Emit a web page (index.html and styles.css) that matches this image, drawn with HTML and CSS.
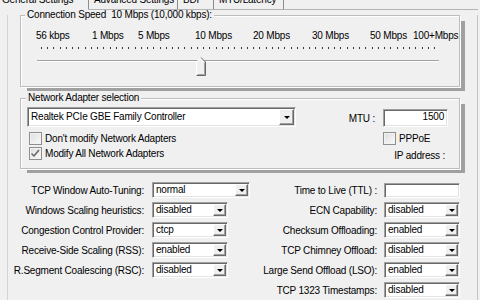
FILE: index.html
```html
<!DOCTYPE html>
<html lang="en">
<head>
    <meta charset="UTF-8">
    <title>TCP Optimizer</title>
    <link rel="stylesheet" href="styles.css">
</head>
<body>
    <div class="tabs">
        <div class="tab active">General Settings</div>
        <div class="tab tab-adv">Advanced Settings</div>
        <div class="tab tab-bdp">BDP</div>
        <div class="tab tab-mtu">MTU/Latency</div>
        <div class="tab-fill"></div>
    </div>

    <div class="page">
        <div class="group speed">
            <div class="group-title">Connection Speed&nbsp; 10 Mbps (10,000 kbps):</div>
            <div class="scale">
                <span>56 kbps</span>
                <span>1 Mbps</span>
                <span>5 Mbps</span>
                <span>10 Mbps</span>
                <span>20 Mbps</span>
                <span>30 Mbps</span>
                <span>50 Mbps</span>
                <span>100+Mbps</span>
            </div>
            <div class="slider">
                <div class="ticks"></div>
                <div class="track"></div>
                <svg class="thumb" width="10" height="19" viewBox="0 0 10 19">
                    <polygon points="0.5,5 5,0.5 9.5,5 9.5,18.5 0.5,18.5" fill="#f0f0f0"/>
                    <polyline points="0.5,18 0.5,5 5,0.5" fill="none" stroke="#fff"/>
                    <polyline points="5,0.5 9.5,5 9.5,18.5 0.5,18.5" fill="none" stroke="#696969"/>
                    <polyline points="8.5,5.5 8.5,17.5 1.5,17.5" fill="none" stroke="#a0a0a0"/>
                </svg>
            </div>
        </div>

        <div class="group adapter">
            <div class="group-title">Network Adapter selection</div>
            <div class="adapter-body">
                <div class="adapter-left">
                    <div class="combo adapter-combo">
                        <span class="value">Realtek PCIe GBE Family Controller</span>
                        <span class="arrow"><i></i></span>
                    </div>
                    <div class="check first"><span class="box"></span>Don't modify Network Adapters</div>
                    <div class="check">
                        <span class="box">
                            <svg width="11" height="11" viewBox="0 0 11 11"><polyline points="1.5,5.5 4,8 9,2" fill="none" stroke="#606060" stroke-width="1.4"/></svg>
                        </span>Modify All Network Adapters
                    </div>
                </div>
                <div class="adapter-right">
                    <span class="mtu-label">MTU :</span>
                    <div class="field mtu">1500</div>
                    <div class="check pppoe"><span class="box"></span>PPPoE</div>
                    <span class="ip">IP address :</span>
                </div>
            </div>
        </div>

        <div class="settings">
            <span class="label">TCP Window Auto-Tuning:</span>
            <div class="combo wide"><span class="value">normal</span><span class="arrow"><i></i></span></div>
            <span class="label">Time to Live (TTL) :</span>
            <div class="field right"></div>

            <span class="label">Windows Scaling heuristics:</span>
            <div class="combo"><span class="value">disabled</span><span class="arrow"><i></i></span></div>
            <span class="label">ECN Capability:</span>
            <div class="combo right"><span class="value">disabled</span><span class="arrow"><i></i></span></div>

            <span class="label">Congestion Control Provider:</span>
            <div class="combo"><span class="value">ctcp</span><span class="arrow"><i></i></span></div>
            <span class="label">Checksum Offloading:</span>
            <div class="combo right"><span class="value">enabled</span><span class="arrow"><i></i></span></div>

            <span class="label">Receive-Side Scaling (RSS):</span>
            <div class="combo"><span class="value">enabled</span><span class="arrow"><i></i></span></div>
            <span class="label">TCP Chimney Offload:</span>
            <div class="combo right"><span class="value">disabled</span><span class="arrow"><i></i></span></div>

            <span class="label">R.Segment Coalescing (RSC):</span>
            <div class="combo"><span class="value">disabled</span><span class="arrow"><i></i></span></div>
            <span class="label">Large Send Offload (LSO):</span>
            <div class="combo right"><span class="value">enabled</span><span class="arrow"><i></i></span></div>

            <span class="label last">TCP 1323 Timestamps:</span>
            <div class="combo right"><span class="value">disabled</span><span class="arrow"><i></i></span></div>
        </div>
    </div>
</body>
</html>
```

FILE: styles.css
```css
body {
    margin: 0;
    width: 480px;
    height: 300px;
    overflow: hidden;
    background-color: #f0f0f0;
    color: #000;
    font-family: "Liberation Sans", Arial, sans-serif;
    font-size: 10px;
    letter-spacing: -0.2px;
}

/* tab strip, cut off at the top */
.tabs {
    display: flex;
    width: 478px;
    height: 19px;
    margin-top: -9px;
    line-height: 18px;
}
.tab {
    box-sizing: border-box;
    flex: none;
    padding-left: 5px;
    border-right: 1px solid #8c8c8c;
    border-bottom: 1px solid #b4b4b4;
    white-space: nowrap;
    overflow: hidden;
}
.tab.active {
    width: 89px;
    padding-left: 2px;
    border-bottom-color: transparent;
}
.tab-adv { width: 89px; }
.tab-bdp { width: 36px; }
.tab-mtu { width: 70px; }
.tab-fill {
    flex: 1;
    border-bottom: 1px solid #b4b4b4;
}

.page {
    box-sizing: border-box;
    width: 471px;
    height: 300px;
    margin-left: 7px;
    border-left: 1px solid #d4d4d4;
    border-right: 1px solid #c4c4c4;
}

/* group boxes */
.group {
    box-sizing: border-box;
    width: 440px;
    margin-left: 12px;
    border: 1px solid #bdbdbd;
    box-shadow: inset 1px 1px #fff, 1px 1px #fff, 6px 5px 0 -1px #a0a0a0;
}
.speed {
    height: 72px;
    margin-top: 5px;
}
.adapter {
    height: 71px;
    margin-top: 11px;
}
.group-title {
    width: fit-content;
    height: 12px;
    margin: -7px 0 0 4px;
    padding: 0 2px;
    line-height: 12px;
    background-color: #f0f0f0;
    white-space: nowrap;
}
.adapter .group-title {
    margin-left: 5px;
}

/* speed slider */
.scale {
    display: grid;
    grid-template-columns: 56px 46px 57px 58px 59px 58px 43px auto;
    margin: 9px 0 0 15px;
    line-height: 12px;
    white-space: nowrap;
}
.slider {
    position: relative;
    height: 30px;
}
.ticks {
    width: 394px;
    height: 2px;
    margin: 5px 0 0 20px;
    background: repeating-linear-gradient(90deg, #3a3a3a 0 1px, transparent 1px 6.238px);
}
.track {
    width: 402px;
    height: 0;
    margin: 11px 0 0 16px;
    border-top: 1px solid #a0a0a0;
    border-bottom: 1px solid #fff;
}
.thumb {
    position: absolute;
    left: 175px;
    top: 10px;
}

/* adapter section */
.adapter-body {
    display: flex;
    justify-content: space-between;
    margin-top: 3px;
    padding: 0 11px 0 6px;
}
.adapter-left {
    flex: none;
}
.check {
    display: flex;
    align-items: center;
    gap: 3px;
    height: 15px;
    margin-left: 2px;
    white-space: nowrap;
}
.check.first {
    margin-top: 4px;
}
.box {
    box-sizing: border-box;
    display: flex;
    align-items: center;
    justify-content: center;
    width: 13px;
    height: 13px;
    border: 1px solid #8f8f8f;
    background: linear-gradient(135deg, #dedede, #fafafa);
    box-shadow: inset 0 0 0 1px #f2f2f2;
}
.adapter-right {
    display: grid;
    grid-template-columns: auto 65px;
    column-gap: 8px;
    align-items: center;
    align-content: start;
}
.mtu-label {
    justify-self: end;
    margin-top: 2px;
}
.mtu {
    height: 18px;
    margin-top: 2px;
    padding-right: 3px;
    line-height: 14px;
    text-align: right;
}
.pppoe {
    grid-column: 2;
    margin: 4px 0 0 0;
}
.ip {
    grid-column: 1 / -1;
    justify-self: end;
    margin: 4px 3px 0 0;
    line-height: 12px;
}

/* TCP settings */
.settings {
    display: grid;
    grid-template-columns: 137px 105px 128px 82px;
    grid-auto-rows: 20px;
    align-items: center;
    margin-top: 11px;
}
.label {
    justify-self: end;
    padding-right: 1px;
    white-space: nowrap;
}
.label.last {
    grid-column: 3;
}

/* combo boxes and edit fields */
.combo, .field {
    box-sizing: border-box;
    background-color: #fff;
    border: 1px solid;
    border-color: #a0a0a0 #fff #fff #a0a0a0;
    box-shadow: inset 1px 1px #696969, inset -1px -1px #e3e3e3;
}
.combo {
    display: flex;
    width: 76px;
    height: 16px;
    margin-left: 7px;
    padding: 1px;
}
.combo.wide {
    width: 98px;
}
.combo.adapter-combo {
    width: 269px;
    height: 20px;
    margin-left: 0;
}
.combo.right, .field.right {
    margin-left: 6px;
}
.field.right {
    width: 76px;
    height: 15px;
}
.value {
    flex: 1;
    padding-left: 2px;
    overflow: hidden;
    white-space: nowrap;
    line-height: 12px;
}
.adapter-combo .value {
    line-height: 16px;
}
.arrow {
    box-sizing: border-box;
    display: flex;
    align-items: center;
    justify-content: center;
    width: 13px;
    background-color: #f0f0f0;
    border: 1px solid;
    border-color: #fff #696969 #696969 #fff;
    box-shadow: inset -1px -1px #a0a0a0;
}
.adapter-combo .arrow {
    width: 15px;
}
.arrow i {
    width: 0;
    height: 0;
    border-left: 3px solid transparent;
    border-right: 3px solid transparent;
    border-top: 3px solid #000;
}
```
